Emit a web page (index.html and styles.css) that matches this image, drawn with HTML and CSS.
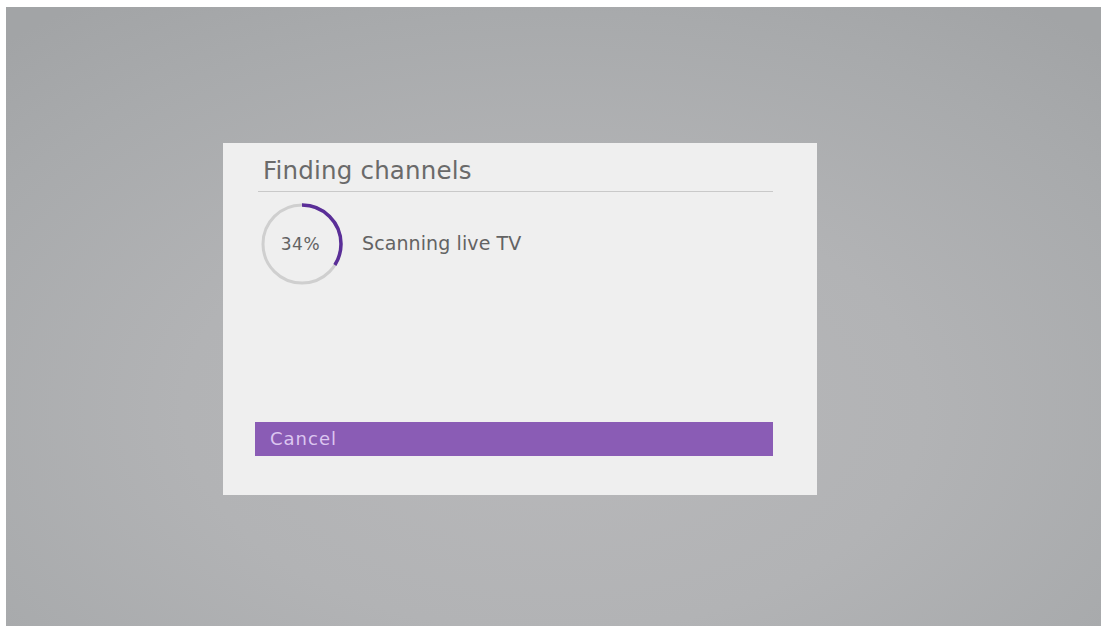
FILE: index.html
```html
<!DOCTYPE html>
<html>
<head>
<meta charset="utf-8">
<link rel="stylesheet" href="styles.css">
</head>
<body>
<div class="screen">
  <div class="dialog">
    <div class="title">Finding channels</div>
    <div class="divider"></div>
    <div class="row">
      <div class="ring">
        <svg width="84" height="84" viewBox="0 0 84 84">
          <circle cx="42" cy="42" r="39" fill="none" stroke="#cfcfcf" stroke-width="3"/>
          <circle cx="42" cy="42" r="39" fill="none" stroke="#5a2e98" stroke-width="3.5"
            stroke-dasharray="83.3 1000" transform="rotate(-90 42 42)"/>
        </svg>
        <span class="pct">34%</span>
      </div>
      <div class="status">Scanning live TV</div>
    </div>
    <div class="spacer"></div>
    <div class="button">Cancel</div>
  </div>
</div>
</body>
</html>
```

FILE: styles.css
```css
html, body {
  margin: 0;
  padding: 0;
  background: #ffffff;
}
.screen {
  margin: 7px 2px 0 6px;
  height: 619px;
  background: radial-gradient(ellipse 75% 80% at 50% 65%, #b8b8ba 0%, #b2b3b5 45%, #a8aaac 80%, #a2a4a6 100%);
  box-sizing: border-box;
  padding: 136px 0 0 217px;
  font-family: "DejaVu Sans", "Open Sans", sans-serif;
}
.dialog {
  width: 594px;
  height: 352px;
  background: #efefef;
  box-sizing: border-box;
  padding: 12px 44px 39px 32px;
  display: flex;
  flex-direction: column;
}
.title {
  font-size: 24.5px;
  color: #6a6a6a;
  padding-left: 8px;
  line-height: 32px;
  letter-spacing: 0.2px;
}
.divider {
  height: 1px;
  background: #c9c9c9;
  margin: 4px 0 0 3px;
}
.row {
  display: flex;
  align-items: center;
  margin-top: 10px;
  padding-left: 5px;
}
.ring {
  position: relative;
  width: 84px;
  height: 84px;
}
.ring svg {
  display: block;
}
.pct {
  position: absolute;
  left: 0;
  right: 0;
  top: 0;
  bottom: 0;
  display: flex;
  align-items: center;
  justify-content: center;
  font-size: 17px;
  letter-spacing: 0.6px;
  color: #626262;
  padding-right: 3px;
}
.status {
  margin-left: 18px;
  font-size: 19px;
  color: #636363;
  letter-spacing: 0.1px;
  padding-bottom: 2px;
}
.spacer {
  flex: 1;
}
.button {
  height: 34px;
  background: #8a5cb5;
  color: #dcc6f0;
  font-size: 18px;
  letter-spacing: 1px;
  line-height: 34px;
  padding-left: 15px;
  box-sizing: border-box;
}
```
